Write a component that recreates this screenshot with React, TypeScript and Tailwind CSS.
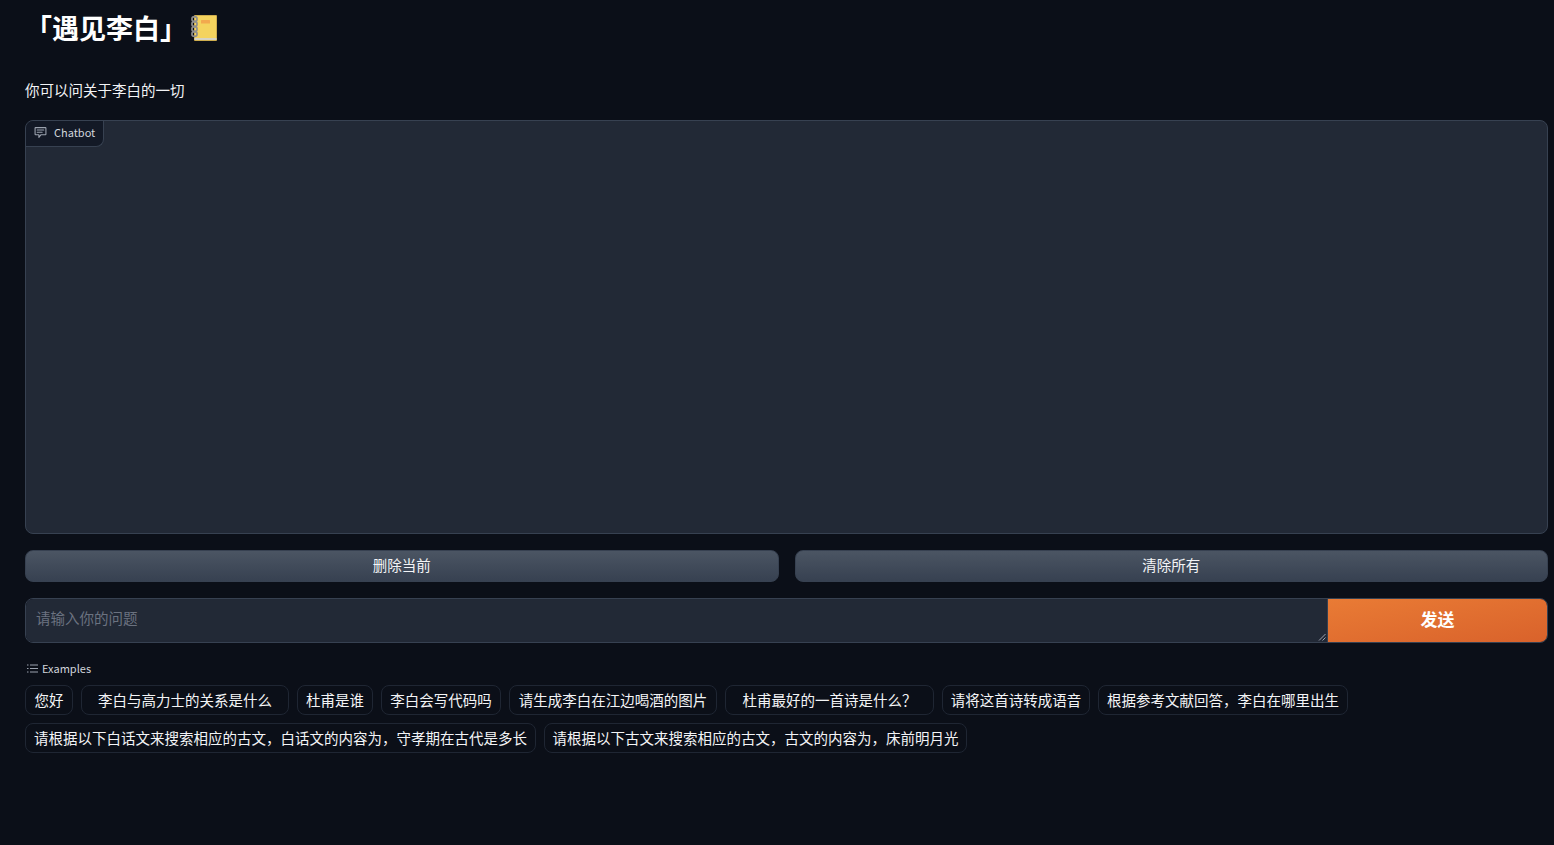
import React from "react";

const row1: [string, string][] = [
  ["您好", "w-[48px]"],
  ["李白与高力士的关系是什么", "w-[208px]"],
  ["杜甫是谁", "w-[76px]"],
  ["李白会写代码吗", "w-[120px]"],
  ["请生成李白在江边喝酒的图片", "w-[208px]"],
  ["杜甫最好的一首诗是什么？", "w-[209px]"],
  ["请将这首诗转成语音", "w-[148px]"],
  ["根据参考文献回答，李白在哪里出生", "w-[250px]"],
];
const row2: [string, string][] = [
  ["请根据以下白话文来搜索相应的古文，白话文的内容为，守孝期在古代是多长", "w-[511px]"],
  ["请根据以下古文来搜索相应的古文，古文的内容为，床前明月光", "w-[423px]"],
];

function Chip({ label, w }: { label: string; w: string }) {
  return (
    <button className={`${w} h-[30px] shrink-0 rounded-lg border border-[#1f2633] bg-[#0b0f18] text-center text-[14.5px] leading-[28px] whitespace-nowrap text-[#f3f4f6]`}>
      {label}
    </button>
  );
}

function Notebook() {
  return (
    <svg width="26" height="28" viewBox="0 0 26 28" className="ml-[12px] mt-[4px] shrink-0">
      <rect x="3" y="1" width="23" height="26" rx="1" fill="#a8873f" />
      <rect x="3.5" y="1.5" width="22" height="25" fill="#f4d35e" />
      <rect x="3.5" y="24" width="22" height="2" fill="#d6d3c4" />
      <rect x="10" y="6" width="9" height="3.5" rx="0.5" fill="#f2a94e" />
      <g fill="none" stroke="#8f8f8f" strokeWidth="1.6">
        <ellipse cx="3.5" cy="5" rx="2.6" ry="2.4" />
        <ellipse cx="3.5" cy="10" rx="2.6" ry="2.4" />
        <ellipse cx="3.5" cy="15" rx="2.6" ry="2.4" />
        <ellipse cx="3.5" cy="20" rx="2.6" ry="2.4" />
      </g>
    </svg>
  );
}

export default function App() {
  return (
    <div
      className="min-h-[845px] overflow-hidden bg-[#0b0f18] pl-[25px] pr-[6px] text-[#f3f4f6]"
      style={{ fontFamily: '"Noto Sans CJK SC", "Noto Sans", sans-serif' }}
    >
      <h1 className="flex h-[60px] items-start pt-[10px] text-[27px] leading-[36px] font-bold text-white">
        <span className="w-[154px]">「遇见李白」</span>
        <Notebook />
      </h1>
      <p className="mt-[20px] h-[22px] -translate-y-px text-[14.5px] leading-[22px] text-[#f3f4f6]">你可以问关于李白的一切</p>

      <div className="mt-[18px] h-[414px] overflow-hidden rounded-lg border border-[#374151] bg-[#222936]">
        <div className="flex h-[26px] w-[78px] items-center gap-[7px] rounded-br-lg border-r border-b border-[#374151] bg-[#131926] pb-[2px] pl-[8px] text-[11px] text-[#d1d5db]">
          <svg width="13" height="13" viewBox="0 0 24 24" fill="none" stroke="#9ca3af" strokeWidth="2" strokeLinecap="round" strokeLinejoin="round">
            <path d="M3 3h18a1 1 0 0 1 1 1v11a1 1 0 0 1-1 1H13l-4 5v-5H3a1 1 0 0 1-1-1V4a1 1 0 0 1 1-1z" />
            <path d="M6 7.500h12M6 11.500h9" />
          </svg>
          <span>Chatbot</span>
        </div>
      </div>

      <div className="mt-[16px] flex h-[32px] gap-4">
        {["删除当前", "清除所有"].map((t) => (
          <button key={t} className="h-full flex-1 rounded-lg border border-[#374151] bg-gradient-to-b from-[#4b5563] to-[#374151] pb-[2px] text-[14.5px] text-[#f3f4f6]">
            {t}
          </button>
        ))}
      </div>

      <div className="mt-[16px] flex h-[45px] overflow-hidden rounded-lg border border-[#374151]">
        <div className="relative flex-1 bg-[#222936] px-[10px] pt-[8px] text-[14.5px] leading-[22px] text-[#6b7280]">
          请输入你的问题
          <svg width="8" height="8" viewBox="0 0 8 8" className="absolute right-[1px] bottom-[1px]" stroke="#9ca3af" strokeWidth="1">
            <path d="M1 7.5 7.5 1M4.5 7.5 7.5 4.5" />
          </svg>
        </div>
        <button className="w-[220px] border-l border-[#374151] bg-gradient-to-br from-[#e97b35] to-[#d9622b] pb-[3px] text-[17px] font-bold text-white">
          发送
        </button>
      </div>

      <div className="mt-[17px] flex h-[17px] items-center gap-[4px] pb-[1px] pl-[2px] text-[11px] text-[#d1d5db]">
        <svg width="11" height="11" viewBox="0 0 11 11" stroke="#9ca3af" strokeWidth="1">
          <path d="M3 2h8M3 5.5h8M3 9h8M0 2h1.500M0 5.500h1.500M0 9h1.500" />
        </svg>
        <span>Examples</span>
      </div>

      <div className="mt-[8px] flex gap-2">
        {row1.map(([l, w]) => (
          <Chip key={l} label={l} w={w} />
        ))}
      </div>
      <div className="mt-2 flex gap-2">
        {row2.map(([l, w]) => (
          <Chip key={l} label={l} w={w} />
        ))}
      </div>
    </div>
  );
}
